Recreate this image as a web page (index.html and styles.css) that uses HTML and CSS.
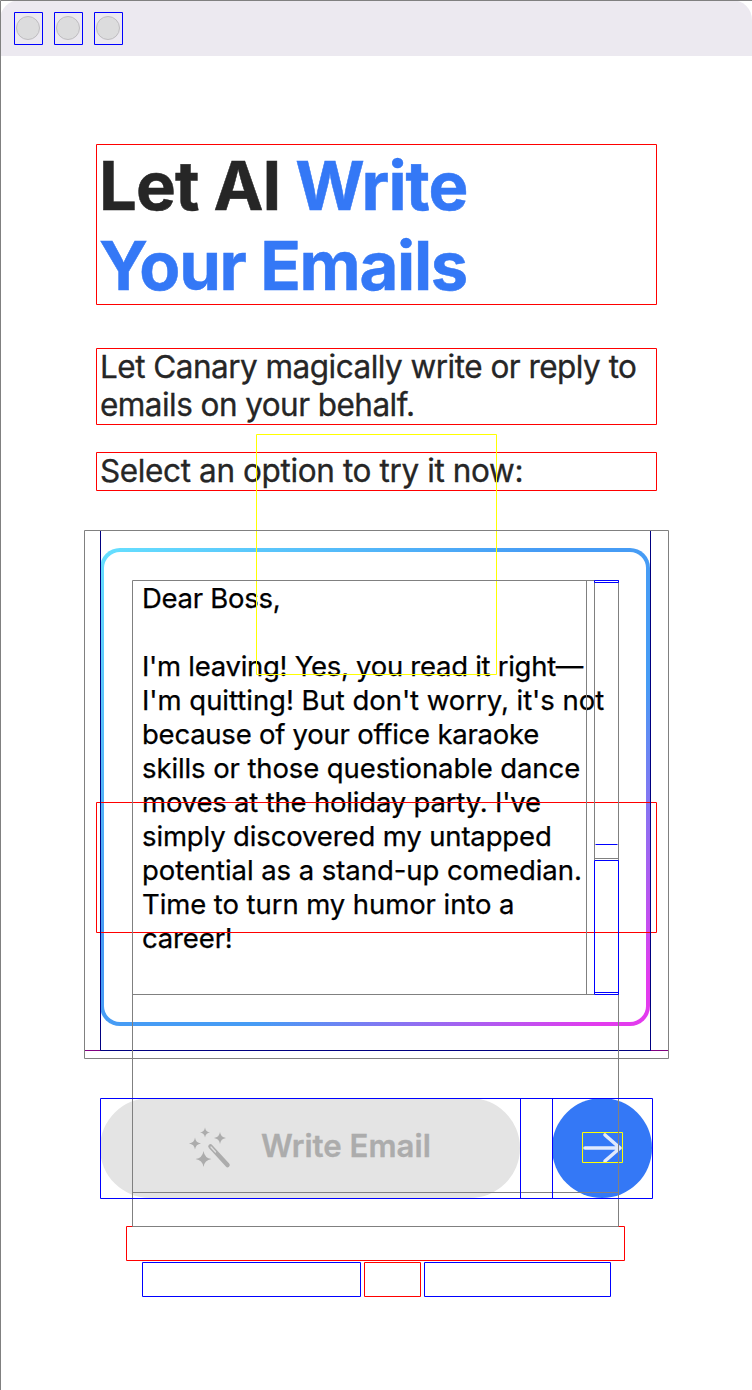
FILE: index.html
```
<!DOCTYPE html>
<html lang="en">
<head>
<meta charset="utf-8">
<title>Let AI Write Your Emails</title>
<link rel="stylesheet" href="styles.css">
</head>
<body>
<div class="window">
  <header class="titlebar"><i class="dot"></i><i class="dot"></i><i class="dot"></i></header>
  <main class="content">
    <h1 class="title"><span class="line t1">Let AI <b>Write</b></span><span class="line t2"><b>Your Emails</b></span></h1>
    <p class="intro"><span class="line p1">Let Canary magically write or reply to</span><span class="line p2">emails on your behalf.</span></p>
    <p class="prompt"><span class="line p3">Select an option to try it now:</span></p>
    <section class="card">
      <span class="line b1">Dear Boss,</span>
      <span class="line">&nbsp;</span>
      <span class="line b2">I'm leaving! Yes, you read it right—</span>
      <span class="line b3">I'm quitting! But don't worry, it's not</span>
      <span class="line b4">because of your office karaoke</span>
      <span class="line b5">skills or those questionable dance</span>
      <span class="line b6">moves at the holiday party. I've</span>
      <span class="line b7">simply discovered my untapped</span>
      <span class="line b8">potential as a stand-up comedian.</span>
      <span class="line b9">Time to turn my humor into a</span>
      <span class="line b10">career!</span>
    </section>
    <div class="actions">
      <button class="write">
        <svg class="wand" width="42" height="42" viewBox="0 0 42 42">
          <path d="M16 .5Q16.700 4.800 21 5.500Q16.700 6.200 16 10.500Q15.300 6.200 11 5.500Q15.300 4.800 16 .5ZM31 5Q31.700 10.300 37 11Q31.700 11.700 31 17Q30.300 11.700 25 11Q30.300 10.300 31 5ZM6 10.500Q6.700 15.800 12 16.500Q6.700 17.200 6 22.500Q5.300 17.200 0 16.500Q5.300 15.800 6 10.500ZM14.500 24Q15.500 31 22.500 32Q15.500 33 14.500 40Q13.500 33 6.500 32Q13.500 31 14.500 24Z"/>
          <path class="stick" d="M21.500 19.500 38.500 38"/><path class="tip" d="M22 20 26.500 25"/>
        </svg>
        <span class="label">Write Email</span>
      </button>
      <button class="next" aria-label="Next">
        <svg width="42" height="32" viewBox="0 0 42 32"><path d="M4 16H39M24 3 39 16 24 29"/></svg>
      </button>
    </div>
  </main>
  <svg class="frames" width="752" height="1390" viewBox="0 0 752 1390">
    <g transform="translate(.5 .5)">
      <g class="red">
        <path d="M96 144H656V304H96ZM96 348H656V424H96ZM96 452H656V490H96ZM96 802H656V932H96ZM126 1226H624V1260H126ZM364 1262H420V1296H364Z"/>
      </g>
      <path class="purple" d="M84 1050H668"/>
      <path class="navy" d="M100 530V1050H650V530"/>
      <path class="yellow" d="M256 434H496V674H256ZM582 1132H622V1162H582Z"/>
      <path class="gray" d="M0 1390V0H752M84 530H668V1058H84ZM132 580H618V1226H132ZM132 994H594M586 580V994M594 580V860M594 858H618M132 1192H618"/>
      <path class="blue" d="M14 12H42V44H14ZM54 12H82V44H54ZM94 12H122V44H94ZM594 580H618V582H594ZM595 844H617M594 860H618V994H594ZM594 992H618M100 1098H652V1198H100ZM520 1098V1198M552 1098V1198M142 1262H360V1296H142ZM424 1262H610V1296H424Z"/>
    </g>
  </svg>
</div>
</body>
</html>
```
FILE: styles.css
```
* { box-sizing: border-box; }
body { margin: 0; background: #fff; font-family: Inter, "Liberation Sans", sans-serif; color: #262626; }
.window { position: relative; width: 752px; height: 1390px; overflow: hidden; }
.titlebar { height: 56px; padding: 16px 0 0 16px; display: flex; gap: 16px; background: #ece9f0; border-radius: 20px 20px 0 0; }
.dot { width: 24px; height: 24px; border-radius: 50%; background: #dcdcdd; border: 1px solid #bfbdc0; }
.content { display: flex; flex-direction: column; padding: 88px 100px 0; }
.line { display: block; white-space: nowrap; }
.title { margin: 0 0 0 -1px; height: 160px; padding-top: 2px; font-size: 67px; line-height: 80px; font-weight: 700; -webkit-text-stroke: .5px; }
.title b { color: #3478f6; font-weight: 700; }
.t1 { letter-spacing: -.95px; }
.t2 { letter-spacing: -1.28px; }
.intro, .prompt { margin: 44px 0 0; font-size: 31.5px; line-height: 38px; -webkit-text-stroke: .3px; }
.prompt { margin-top: 28px; }
.p1 { letter-spacing: -.52px; }
.p2 { letter-spacing: -.55px; }
.p3 { letter-spacing: -.38px; }
.card { margin: 58px 0 0; width: 550px; height: 478px; padding: 29px 38px; border: 4px solid transparent; border-radius: 20px; background: linear-gradient(#fff, #fff) padding-box, linear-gradient(to bottom right, #66e0ff 0%, #469cf5 40%, #469cf5 64%, #e33bee 95%) border-box; color: #000; font-size: 27.5px; line-height: 34px; -webkit-text-stroke: .25px; }
.b1 { letter-spacing: -.27px; }
.b2 { letter-spacing: -.28px; }
.b3 { letter-spacing: -.03px; }
.b4 { letter-spacing: -.24px; }
.b5 { letter-spacing: -.1px; }
.b6 { letter-spacing: -.19px; }
.b7 { letter-spacing: -.14px; }
.b8 { letter-spacing: -.06px; }
.b9 { letter-spacing: -.08px; }
.b10 { letter-spacing: -.15px; }
.actions { margin-top: 72px; display: flex; gap: 32px; }
button { border: 0; padding: 0; font: inherit; display: flex; align-items: center; }
.write { width: 420px; height: 100px; border-radius: 50px; background: #e4e4e4; color: #acacac; padding: 0 0 0 89px; }
.wand { margin-right: 30px; fill: #acacac; }
.stick { stroke: #acacac; stroke-width: 4.5; stroke-linecap: round; }
.tip { stroke: #dedede; stroke-width: 1.3; stroke-linecap: round; }
.label { font-size: 31.2px; font-weight: 600; white-space: nowrap; padding-bottom: 4px; -webkit-text-stroke: .3px; }
.next { width: 100px; height: 100px; border-radius: 50%; background: #3478f6; justify-content: center; }
.next path { fill: none; stroke: #e1eafd; stroke-width: 3.6; stroke-linecap: round; stroke-linejoin: round; }
.frames { position: absolute; inset: 0; fill: none; pointer-events: none; }
.red { stroke: #f00; }
.blue { stroke: #00f; }
.gray { stroke: #808080; }
.navy { stroke: #000080; }
.purple { stroke: #800080; }
.yellow { stroke: #ff0; }
```
